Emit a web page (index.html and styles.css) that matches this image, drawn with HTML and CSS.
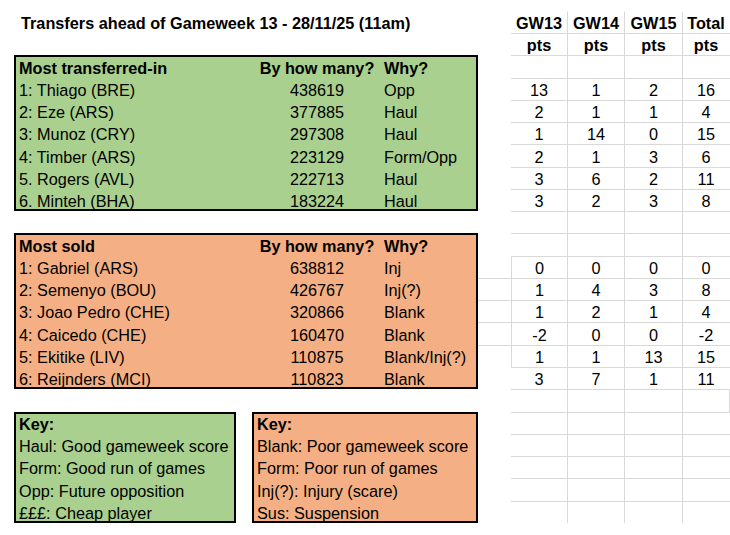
FILE: index.html
```html
<!DOCTYPE html>
<html lang="en">
<head>
<meta charset="utf-8">
<title>Transfers ahead of Gameweek 13</title>
<link rel="stylesheet" href="styles.css">
</head>
<body>
<div class="sheet">
  <div class="left">
    <div class="line title">Transfers ahead of Gameweek 13 - 28/11/25 (11am)</div>
    <div class="line"></div>

    <section class="tbl green">
      <span class="c1 b">Most transferred-in</span><span class="c2 b">By how many?</span><span class="c3 b">Why?</span>
      <span class="c1">1: Thiago (BRE)</span><span class="c2">438619</span><span class="c3">Opp</span>
      <span class="c1">2: Eze (ARS)</span><span class="c2">377885</span><span class="c3">Haul</span>
      <span class="c1">3: Munoz (CRY)</span><span class="c2">297308</span><span class="c3">Haul</span>
      <span class="c1">4: Timber (ARS)</span><span class="c2">223129</span><span class="c3">Form/Opp</span>
      <span class="c1">5. Rogers (AVL)</span><span class="c2">222713</span><span class="c3">Haul</span>
      <span class="c1">6. Minteh (BHA)</span><span class="c2">183224</span><span class="c3">Haul</span>
    </section>

    <div class="line"></div>

    <section class="tbl orange">
      <span class="c1 b">Most sold</span><span class="c2 b">By how many?</span><span class="c3 b">Why?</span>
      <span class="c1">1: Gabriel (ARS)</span><span class="c2">638812</span><span class="c3">Inj</span>
      <span class="c1">2: Semenyo (BOU)</span><span class="c2">426767</span><span class="c3">Inj(?)</span>
      <span class="c1">3: Joao Pedro (CHE)</span><span class="c2">320866</span><span class="c3">Blank</span>
      <span class="c1">4: Caicedo (CHE)</span><span class="c2">160470</span><span class="c3">Blank</span>
      <span class="c1">5: Ekitike (LIV)</span><span class="c2">110875</span><span class="c3">Blank/Inj(?)</span>
      <span class="c1">6: Reijnders (MCI)</span><span class="c2">110823</span><span class="c3">Blank</span>
    </section>

    <div class="line"></div>

    <div class="keys">
      <section class="key green">
        <div class="line b">Key:</div>
        <div class="line">Haul: Good gameweek score</div>
        <div class="line">Form: Good run of games</div>
        <div class="line">Opp: Future opposition</div>
        <div class="line">£££: Cheap player</div>
      </section>
      <section class="key key-wide orange">
        <div class="line b">Key:</div>
        <div class="line">Blank: Poor gameweek score</div>
        <div class="line">Form: Poor run of games</div>
        <div class="line">Inj(?): Injury (scare)</div>
        <div class="line">Sus: Suspension</div>
      </section>
    </div>
  </div>

  <div class="pts">
    <div class="pr first b"><span></span><span>GW13</span><span>GW14</span><span>GW15</span><span>Total</span></div>
    <div class="pr b"><span></span><span>pts</span><span>pts</span><span>pts</span><span>pts</span></div>
    <div class="pr"><span></span><span></span><span></span><span></span><span></span></div>
    <div class="pr"><span></span><span>13</span><span>1</span><span>2</span><span>16</span></div>
    <div class="pr"><span></span><span>2</span><span>1</span><span>1</span><span>4</span></div>
    <div class="pr"><span></span><span>1</span><span>14</span><span>0</span><span>15</span></div>
    <div class="pr"><span></span><span>2</span><span>1</span><span>3</span><span>6</span></div>
    <div class="pr"><span></span><span>3</span><span>6</span><span>2</span><span>11</span></div>
    <div class="pr"><span></span><span>3</span><span>2</span><span>3</span><span>8</span></div>
    <div class="pr"><span></span><span></span><span></span><span></span><span></span></div>
    <div class="pr"><span></span><span></span><span></span><span></span><span></span></div>
    <div class="pr lb"><span></span><span>0</span><span>0</span><span>0</span><span>0</span></div>
    <div class="pr lb ext"><span></span><span>1</span><span>4</span><span>3</span><span>8</span></div>
    <div class="pr lb ext"><span></span><span>1</span><span>2</span><span>1</span><span>4</span></div>
    <div class="pr lb ext"><span></span><span>-2</span><span>0</span><span>0</span><span>-2</span></div>
    <div class="pr lb ext"><span></span><span>1</span><span>1</span><span>13</span><span>15</span></div>
    <div class="pr"><span></span><span>3</span><span>7</span><span>1</span><span>11</span></div>
    <div class="pr rb"><span></span><span></span><span></span><span></span><span></span></div>
    <div class="pr"><span></span><span></span><span></span><span></span><span></span></div>
    <div class="pr"><span></span><span></span><span></span><span></span><span></span></div>
    <div class="pr"><span></span><span></span><span></span><span></span><span></span></div>
    <div class="pr"><span></span><span></span><span></span><span></span><span></span></div>
    <div class="pr"><span></span><span></span><span></span><span></span><span></span></div>
  </div>
</div>
</body>
</html>
```

FILE: styles.css
```css
* {
  box-sizing: border-box;
}

body {
  margin: 0;
  background: #ffffff;
  color: #000000;
  font-family: "Liberation Sans", Arial, sans-serif;
  font-size: 16.25px;
}

.sheet {
  display: flex;
  align-items: flex-start;
  padding-top: 10.73px;
  height: 535px;
  overflow: hidden;
}

.left {
  flex: none;
  width: 464px;
  margin-left: 14px;
}

.b {
  font-weight: bold;
}

.line {
  height: 22.27px;
  display: flex;
  align-items: flex-end;
  line-height: 18px;
  padding-bottom: 1px;
  white-space: nowrap;
}

.title {
  font-weight: bold;
  padding-left: 7px;
}

.green {
  background: #a9d08e;
}

.orange {
  background: #f4b084;
}

.tbl {
  display: grid;
  grid-template-columns: 239px 128px 97px;
  grid-auto-rows: 22.27px;
  box-shadow: inset 0 0 0 2px #000000;
}

.tbl > span {
  display: flex;
  align-items: flex-end;
  line-height: 18px;
  padding-bottom: 1px;
  white-space: nowrap;
}

.c1 {
  padding-left: 5px;
}

.c2 {
  justify-content: center;
}

.c3 {
  padding-left: 3px;
}

.keys {
  display: flex;
  gap: 16px;
}

.key {
  width: 222px;
  box-shadow: inset 0 0 0 2px #000000;
}

.key .line {
  padding-left: 5px;
}

.key-wide {
  width: 226px;
}

.pts {
  flex: none;
  width: 252px;
}

.pr {
  display: grid;
  grid-template-columns: 33px 56px 57px 58px 48px;
  height: 22.27px;
}

.pr > span {
  display: flex;
  align-items: flex-end;
  justify-content: center;
  line-height: 18px;
  padding-bottom: 1px;
  white-space: nowrap;
  border-top: 1px solid #d9d9d9;
}

.pr > span:first-child {
  border-top-color: transparent;
}

.pr > span:nth-child(n+3) {
  border-left: 1px solid #d9d9d9;
}

.pr > span:last-child {
  padding-right: 1px;
}

.pr.first > span {
  border-top-color: transparent;
}

.pr.lb > span:nth-child(2) {
  border-left: 1px solid #d9d9d9;
}

.pr.ext > span:first-child {
  border-top-color: #d9d9d9;
}

.pr.rb > span:last-child {
  border-right: 1px solid #d9d9d9;
}
```
